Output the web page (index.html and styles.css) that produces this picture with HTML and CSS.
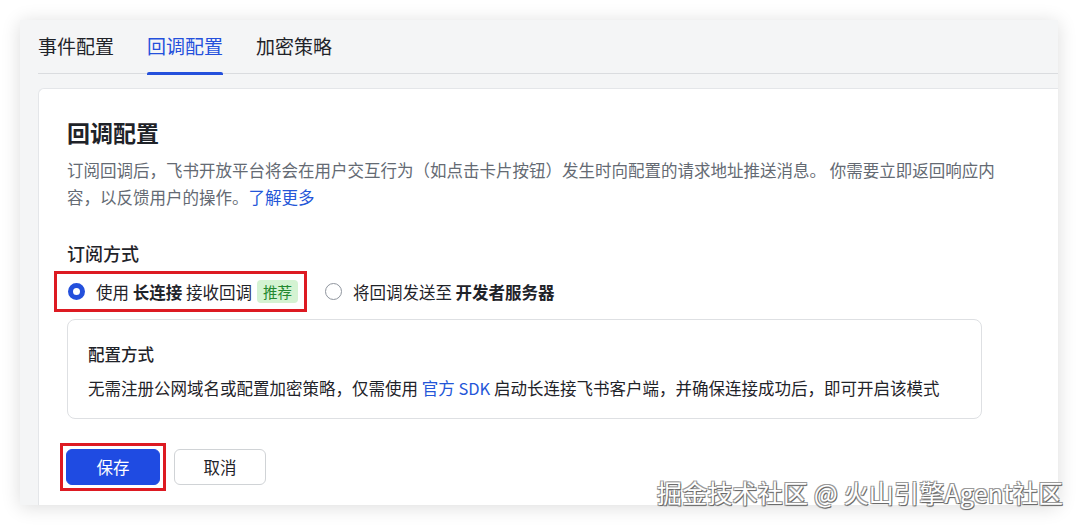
FILE: index.html
```html
<!DOCTYPE html>
<html lang="zh-CN">
<head>
<meta charset="utf-8">
<title>回调配置</title>
<link rel="stylesheet" href="styles.css">
</head>
<body>
<div class="window">
  <div class="tabs">
    <div class="tab">事件配置</div>
    <div class="tab active">回调配置</div>
    <div class="tab">加密策略</div>
  </div>
  <div class="card">
    <h1 class="title">回调配置</h1>
    <p class="desc">订阅回调后，飞书开放平台将会在用户交互行为（如点击卡片按钮）发生时向配置的请求地址推送消息。 你需要立即返回响应内容，以反馈用户的操作。<span class="link">了解更多</span></p>
    <h2 class="subtitle">订阅方式</h2>
    <div class="options">
      <div class="highlight option-box">
        <div class="option">
          <span class="radio checked"></span>
          <span class="option-text">使用 <b>长连接</b> 接收回调</span>
          <span class="badge">推荐</span>
        </div>
      </div>
      <div class="option">
        <span class="radio"></span>
        <span class="option-text">将回调发送至 <b>开发者服务器</b></span>
      </div>
    </div>
    <div class="mode">
      <div class="mode-title">配置方式</div>
      <div class="mode-text">无需注册公网域名或配置加密策略，仅需使用 <span class="link">官方 SDK</span> 启动长连接飞书客户端，并确保连接成功后，即可开启该模式</div>
    </div>
    <div class="actions">
      <div class="highlight btn-box"><button class="btn primary">保存</button></div>
      <button class="btn">取消</button>
    </div>
  </div>
</div>
<div class="watermark">掘金技术社区 @ 火山引擎Agent社区</div>
</body>
</html>
```
FILE: styles.css
```css
* { box-sizing: border-box; }
html, body {
  margin: 0;
  padding: 0;
  background: #ffffff;
  font-family: "Noto Sans CJK SC", "Noto Sans", sans-serif;
  color: #1f2329;
}
body {
  width: 1080px;
  height: 526px;
  overflow: hidden;
  position: relative;
  padding: 20px 22px 0 20px;
}
.window {
  height: 485px;
  background: #f4f5f6;
  box-shadow: 0 2px 18px rgba(0, 0, 0, 0.14);
  display: flex;
  flex-direction: column;
  overflow: hidden;
}
.tabs {
  margin-left: 18px;
  height: 54px;
  display: flex;
  gap: 33px;
  border-bottom: 1px solid #dadcdf;
  flex-shrink: 0;
}
.tab {
  font-size: 19px;
  line-height: 24px;
  padding-top: 14px;
  color: #1f2329;
  position: relative;
}
.tab.active {
  color: #2450dc;
}
.tab.active::after {
  content: "";
  position: absolute;
  left: 0;
  right: 0;
  bottom: -2px;
  height: 3px;
  border-radius: 2px 2px 0 0;
  background: #2450dc;
}
.card {
  flex: 1;
  margin: 14px 0 0 18px;
  background: #ffffff;
  border: 1px solid #e4e6e9;
  border-right: none;
  border-bottom: none;
  border-radius: 6px 0 0 0;
  padding: 27px 0 0 28px;
}
.title {
  margin: 0;
  font-size: 23px;
  line-height: 32px;
  font-weight: 700;
  color: #1f2329;
}
.desc {
  margin: 9px 0 0 0;
  width: 950px;
  font-size: 16.5px;
  line-height: 26.5px;
  color: #646a73;
}
.link {
  color: #2456d8;
}
.subtitle {
  margin: 30px 0 0 0;
  font-size: 18px;
  line-height: 26px;
  font-weight: 500;
  color: #1f2329;
}
.options {
  display: flex;
  align-items: center;
  gap: 18px;
  margin-top: 5px;
  margin-left: -13px;
}
.highlight {
  border: 3px solid #dd1a22;
}
.option-box {
  height: 41px;
  padding: 0 6px 0 11px;
  display: flex;
  align-items: center;
}
.option {
  display: flex;
  align-items: center;
  font-size: 16.5px;
  line-height: 24px;
  color: #1f2329;
}
.option b {
  font-weight: 700;
}
.radio {
  width: 17px;
  height: 17px;
  border-radius: 50%;
  border: 1px solid #8f959e;
  margin-right: 11px;
  background: #fff;
}
.radio.checked {
  border: 5px solid #2450dc;
}
.badge {
  margin-left: 5px;
  height: 23px;
  padding: 0 6px;
  border-radius: 4px;
  background: #d4f3d2;
  color: #23882f;
  font-size: 14.5px;
  line-height: 23px;
}
.mode {
  margin-top: 7px;
  width: 915px;
  height: 100px;
  border: 1px solid #dee0e3;
  border-radius: 8px;
  padding: 21px 20px 0 20px;
}
.mode-title {
  font-size: 16.5px;
  font-weight: 500;
  line-height: 26px;
}
.mode-text {
  margin-top: 8px;
  font-size: 16.5px;
  line-height: 26px;
  color: #1f2329;
}
.actions {
  display: flex;
  align-items: center;
  gap: 8px;
  margin-top: 24px;
  margin-left: -7px;
}
.btn-box {
  padding: 3px;
}
.btn {
  height: 36px;
  width: 92px;
  border-radius: 6px;
  border: 1px solid #d0d3d6;
  background: #fff;
  font-family: inherit;
  font-size: 16.5px;
  color: #1f2329;
}
.btn.primary {
  width: 94px;
  background: #1f4be2;
  border-color: #1f4be2;
  color: #fff;
}
.watermark {
  position: absolute;
  left: 657px;
  top: 476px;
  font-size: 25px;
  line-height: 32px;
  color: #ffffff;
  letter-spacing: 0.2px;
  text-shadow: 1px 1px 0 #6b6b6b, -1px -1px 0 #9a9a9a, 1px -1px 0 #9a9a9a, -1px 1px 0 #9a9a9a, 0 1px 1px #555;
}
```
